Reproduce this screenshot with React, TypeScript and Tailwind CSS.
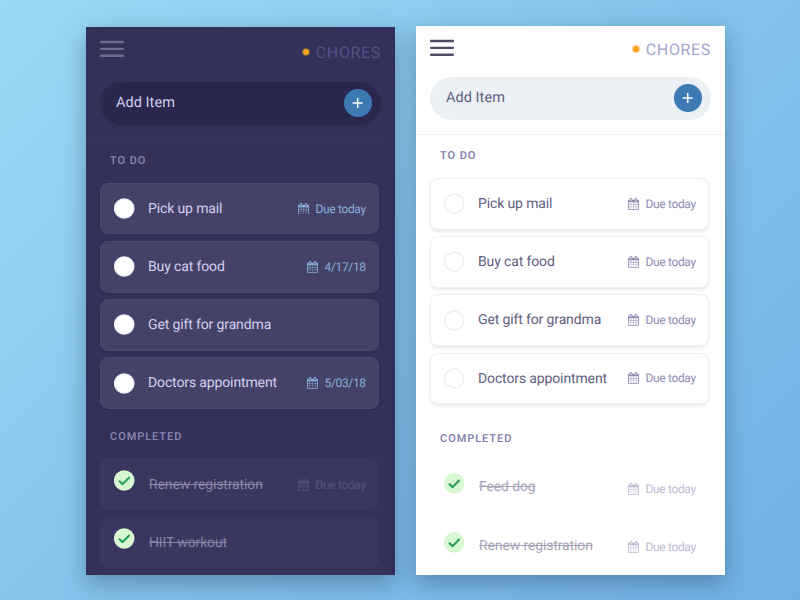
import React from "react";
import clsx from "clsx";

type Item = { title: string; due?: string };

function CalendarIcon() {
  return (
    <svg viewBox="64 0 1664 1792" className="h-[11.8px] w-[11px] shrink-0" fill="currentColor">
      <path d="M192 1664h288v-288h-288v288zm352 0h320v-288h-320v288zm-352-352h288v-320h-288v320zm352 0h320v-320h-320v320zm-352-384h288v-288h-288v288zm736 736h320v-288h-320v288zm-384-736h320v-288h-320v288zm768 736h288v-288h-288v288zm-384-352h320v-320h-320v320zm-352-864v-288q0-13-9.5-22.5t-22.5-9.5h-64q-13 0-22.5 9.5t-9.5 22.5v288q0 13 9.5 22.5t22.5 9.5h64q13 0 22.5-9.5t9.5-22.5zm736 864h288v-320h-288v320zm-384-384h320v-288h-320v288zm384 0h288v-288h-288v288zm32-480v-288q0-13-9.5-22.5t-22.5-9.5h-64q-13 0-22.5 9.5t-9.5 22.5v288q0 13 9.5 22.5t22.5 9.5h64q13 0 22.5-9.5t9.5-22.5zm384-64v1280q0 52-38 90t-90 38h-1408q-52 0-90-38t-38-90v-1280q0-52 38-90t90-38h128v-96q0-66 47-113t113-47h64q66 0 113 47t47 113v96h384v-96q0-66 47-113t113-47h64q66 0 113 47t47 113v96h128q52 0 90 38t38 90z" />
    </svg>
  );
}

function Due({ text, className }: { text: string; className: string }) {
  return (
    <span className={clsx("ml-auto flex items-center gap-1.5 text-[12px] leading-4 tracking-[-0.33px]", className)}>
      <CalendarIcon />
      <span>{text}</span>
    </span>
  );
}

function Header({ dark }: { dark: boolean }) {
  const bar = clsx(dark ? "fill-[#6f6b91]" : "fill-[#4e4c67]");
  return (
    <header
      className={clsx(
        "shrink-0 border-b pl-3.5",
        dark ? "h-28 border-[#37345f]" : "h-[108.6px] border-[#f3f3fb]",
      )}
    >
      <div className={clsx("flex items-start justify-between pr-3.5 pt-[13px]", dark ? "h-[55px]" : "h-[51px]")}>
        <svg viewBox="0 0 24 18" className="h-[18px] w-6">
          <rect className={bar} x="0" y="0.8" width="24" height="2.4" rx="1" />
          <rect className={bar} x="0" y="7.7" width="24" height="2.4" rx="1" />
          <rect className={bar} x="0" y="14.6" width="24" height="2.4" rx="1" />
        </svg>
        <div className={clsx("flex items-center gap-[5px]", dark ? "pt-[3px]" : "pt-px")}>
          <svg viewBox="0 0 10 10" className="-mt-[3px] size-2.5">
            <circle cx="5" cy="5" r="4.3" fill="#f9a826" fillOpacity={dark ? 0.3 : 0.45} />
            <circle cx="5" cy="5" r="2.9" fill="#f9a21b" />
          </svg>
          <span className={clsx("text-[16px] leading-5 tracking-[0.65px]", dark ? "text-[#525287]" : "text-[#a5a5cb]")}>
            CHORES
          </span>
        </div>
      </div>
      <div
        className={clsx(
          "flex h-[43px] w-[281px] items-center justify-between rounded-full pl-4 pr-[9px]",
          dark ? "bg-[#2a274f]" : "bg-[#ebf0f4]",
        )}
      >
        <span className={clsx("pb-px text-[14.5px] leading-5 tracking-[0.05px]", dark ? "text-[#d2cfee]" : "text-[#615e80]")}>
          Add Item
        </span>
        <button className="-mt-px flex size-7 items-center justify-center rounded-full bg-[#3d79b3]">
          <svg viewBox="0 0 12 12" className="size-3" stroke="#fff" strokeWidth="1.6">
            <path d="M5.7 1v10M0.7 6h10" />
          </svg>
        </button>
      </div>
    </header>
  );
}

function SectionTitle({ dark, children, className }: { dark: boolean; children: string; className: string }) {
  return (
    <h2
      className={clsx(
        "ml-6 text-[11px] font-medium leading-4 tracking-[0.95px]",
        dark ? "text-[#8b88b4]" : "text-[#7c7aaa]",
        className,
      )}
    >
      {children}
    </h2>
  );
}

function TodoRow({ item, dark }: { item: Item; dark: boolean }) {
  return (
    <li
      className={clsx(
        "flex h-[51.6px] items-center rounded-lg border px-[12.6px]",
        dark
          ? "border-[#4c4971] bg-[#454269] shadow-[0_1px_2px_rgba(30,25,65,0.25)]"
          : "border-[#efeff9] bg-white shadow-[0_2px_3px_rgba(60,60,90,0.1)]",
      )}
    >
      <svg viewBox="0 0 21 21" className="size-[21px] shrink-0">
        <circle
          cx="10.2"
          cy="10.5"
          r="9.6"
          fill="#fff"
          strokeWidth="1.5"
          className={dark ? "stroke-[#edf2f6]" : "stroke-[#ebf0f4]"}
        />
      </svg>
      <span
        className={clsx(
          "ml-[13.4px] pt-[0.4px] text-[14px] leading-5 tracking-[-0.13px]",
          dark ? "text-[#d2cfee]" : "text-[#615e80]",
        )}
      >
        {item.title}
      </span>
      {item.due && <Due text={item.due} className={dark ? "text-[#8aadda]" : "text-[#8f8db5]"} />}
    </li>
  );
}

function DoneRow({ item, dark }: { item: Item; dark: boolean }) {
  return (
    <li
      className={clsx(
        "flex h-[51.6px] items-center rounded-lg border px-[12.6px]",
        dark ? "border-[#393660] bg-[#39365f]" : "border-transparent",
      )}
    >
      <svg viewBox="0 0 21 21" className="mb-[7px] size-[21px] shrink-0" fill="none">
        <circle cx="10.2" cy="10.5" r="10.3" fill="#d7f8d2" />
        <path d="M5 10.8 8.5 14.1 15.6 7" stroke="#239b5a" strokeWidth="2" />
      </svg>
      <span
        className={clsx(
          "ml-[14.4px] text-[14px] leading-5 tracking-[-0.13px] line-through",
          dark ? "pt-[0.8px] text-[#8884aa]" : "text-[#a7a5b8]",
        )}
      >
        {item.title}
      </span>
      {item.due && (
        <Due text={item.due} className={dark ? "mt-[2px] text-[#50547f]" : "mt-[2.6px] text-[#bdbbd3]"} />
      )}
    </li>
  );
}

function Panel({ dark, todo, done }: { dark: boolean; todo: Item[]; done: Item[] }) {
  return (
    <section
      className={clsx(
        "flex w-[309px] flex-col overflow-hidden shadow-[0_8px_22px_rgba(40,60,90,0.42)]",
        dark ? "mt-[27px] h-[548px] bg-[#33305a]" : "mt-[26px] h-[549px] bg-white",
      )}
    >
      <Header dark={dark} />
      <SectionTitle dark={dark} className={dark ? "mt-3.5" : "mt-[13.4px]"}>
        TO DO
      </SectionTitle>
      <ul className={clsx("ml-3.5 flex w-[279.4px] flex-col gap-[6.6px]", dark ? "mt-[13.8px]" : "mt-3.5")}>
        {todo.map((item) => (
          <TodoRow key={item.title} item={item} dark={dark} />
        ))}
      </ul>
      <SectionTitle dark={dark} className={dark ? "mt-5" : "mt-[27px]"}>
        COMPLETED
      </SectionTitle>
      <ul className={clsx("ml-3.5 flex w-[279.4px] flex-col gap-[6.6px]", dark ? "mt-[13.5px]" : "mt-[14.4px]")}>
        {done.map((item) => (
          <DoneRow key={item.title} item={item} dark={dark} />
        ))}
      </ul>
    </section>
  );
}

export default function App() {
  return (
    <main className="flex h-[600px] w-[800px] items-start gap-[21px] overflow-hidden bg-[linear-gradient(135deg,#9bdaf3_0%,#84c4ec_50%,#70b1e8_100%)] pl-[86px] font-[Roboto,sans-serif] [text-rendering:geometricPrecision]">
      <Panel
        dark
        todo={[
          { title: "Pick up mail", due: "Due today" },
          { title: "Buy cat food", due: "4/17/18" },
          { title: "Get gift for grandma" },
          { title: "Doctors appointment", due: "5/03/18" },
        ]}
        done={[{ title: "Renew registration", due: "Due today" }, { title: "HIIT workout" }]}
      />
      <Panel
        dark={false}
        todo={[
          { title: "Pick up mail", due: "Due today" },
          { title: "Buy cat food", due: "Due today" },
          { title: "Get gift for grandma", due: "Due today" },
          { title: "Doctors appointment", due: "Due today" },
        ]}
        done={[
          { title: "Feed dog", due: "Due today" },
          { title: "Renew registration", due: "Due today" },
        ]}
      />
    </main>
  );
}
